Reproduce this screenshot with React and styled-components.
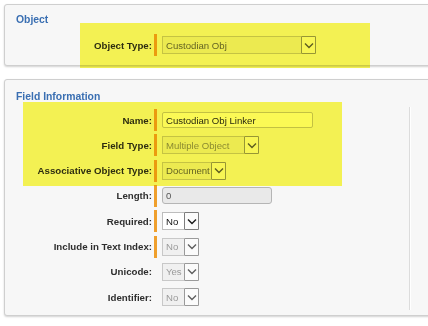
import React from "react";
import styled, { createGlobalStyle } from "styled-components";

const GlobalStyle = createGlobalStyle`
  html, body {
    margin: 0;
    padding: 0;
    background: #ffffff;
    overflow: hidden;
  }
  body {
    font-family: "Liberation Sans", Arial, sans-serif;
  }
`;

const Page = styled.div`
  position: relative;
  width: 428px;
  height: 326px;
  padding: 4px 0 0 4px;
  box-sizing: border-box;
`;

const Panel = styled.section`
  width: 440px;
  height: ${(p) => p.$height}px;
  box-sizing: border-box;
  margin-bottom: 13px;
  padding: ${(p) => p.$padTop}px 0 0 11px;
  background: #f7f7f7;
  border: 1px solid #cfcfcf;
  border-radius: 3px;
  box-shadow: 0 1px 2px rgba(0, 0, 0, 0.18);
`;

const Heading = styled.h2`
  margin: 0 0 ${(p) => p.$gap}px 0;
  font-size: 10.4px;
  line-height: 12px;
  font-weight: 700;
  color: #3a6fb2;
`;

const Rows = styled.div`
  width: 393px;
  border-right: 1px solid #dcdcdc;
  box-shadow: 1px 0 0 #ffffff;
`;

const Row = styled.div`
  display: flex;
  align-items: center;
  height: 25.3px;
`;

const Label = styled.label`
  width: 136px;
  text-align: right;
  font-size: 9.7px;
  font-weight: 700;
  color: #2e2e2e;
  white-space: nowrap;
`;

const Bar = styled.span`
  width: 3px;
  height: 22px;
  margin: 0 5px 0 2px;
  background: ${(p) => (p.$show ? "#ef9f2c" : "transparent")};
`;

const TextInput = styled.div`
  width: ${(p) => p.$w}px;
  height: ${(p) => p.$h}px;
  box-sizing: border-box;
  display: flex;
  align-items: center;
  padding-left: 3px;
  border: 1px solid ${(p) => (p.$disabled ? "#b5b5b5" : "#c6c6c6")};
  border-radius: ${(p) => (p.$disabled ? 3 : 2)}px;
  background: ${(p) => (p.$disabled ? "#e9e9e9" : "#ffffff")};
  font-size: 9.6px;
  color: ${(p) => (p.$disabled ? "#555555" : "#2a2a2a")};
`;

const SelectBox = styled.div`
  width: ${(p) => p.$w}px;
  height: 18px;
  box-sizing: border-box;
  display: flex;
  align-items: stretch;
  border: 1px solid ${(p) => (p.$disabled ? "#c8c8c8" : "#bdbdbd")};
  background: ${(p) => (p.$disabled ? "#f0f0f0" : "#ffffff")};
`;

const SelectText = styled.span`
  flex: 1;
  display: flex;
  align-items: center;
  padding-left: 3px;
  font-size: 9.6px;
  color: ${(p) => p.$color};
  white-space: nowrap;
  overflow: hidden;
`;

const ArrowBox = styled.span`
  width: 15px;
  box-sizing: border-box;
  margin: -1px -1px -1px 0;
  display: flex;
  align-items: center;
  justify-content: center;
  border: 1px solid ${(p) => (p.$disabled ? "#9a9a9a" : "#7d7d7d")};
  border-radius: 1px;
  background: #fbfbfb;
`;

const Highlight = styled.div`
  position: absolute;
  left: ${(p) => p.$x}px;
  top: ${(p) => p.$y}px;
  width: ${(p) => p.$w}px;
  height: ${(p) => p.$h}px;
  background: #fbf955;
  mix-blend-mode: multiply;
  pointer-events: none;
`;

function Chevron({ disabled }) {
  return (
    <svg width="10" height="7" viewBox="0 0 10 7">
      <polyline
        points="1,1.5 5,5.5 9,1.5"
        fill="none"
        stroke={disabled ? "#5e5e5e" : "#1a1a1a"}
        strokeWidth="1.4"
      />
    </svg>
  );
}

function Select({ value, width, color, disabled }) {
  return (
    <SelectBox $w={width} $disabled={disabled}>
      <SelectText $color={color}>{value}</SelectText>
      <ArrowBox $disabled={disabled}>
        <Chevron disabled={disabled} />
      </ArrowBox>
    </SelectBox>
  );
}

function Field({ label, required, children }) {
  return (
    <Row>
      <Label>{label}</Label>
      <Bar $show={required} />
      {children}
    </Row>
  );
}

export default function App() {
  return (
    <Page>
      <GlobalStyle />
      <Panel $height={62} $padTop={9}>
        <Heading $gap={6.5}>Object</Heading>
        <Field label="Object Type:" required>
          <Select value="Custodian Obj" width={154} color="#666" disabled />
        </Field>
      </Panel>

      <Panel $height={237} $padTop={11}>
        <Heading $gap={4.4}>Field Information</Heading>
        <Rows>
          <Field label="Name:" required>
            <TextInput $w={151} $h={16}>Custodian Obj Linker</TextInput>
          </Field>
          <Field label="Field Type:" required>
            <Select value="Multiple Object" width={97} color="#8e8e8e" disabled />
          </Field>
          <Field label="Associative Object Type:" required>
            <Select value="Document" width={64} color="#666" disabled />
          </Field>
          <Field label="Length:" required>
            <TextInput $w={110} $h={17} $disabled>
              0
            </TextInput>
          </Field>
          <Field label="Required:" required>
            <Select value="No" width={37} color="#111" />
          </Field>
          <Field label="Include in Text Index:" required>
            <Select value="No" width={37} color="#9a9a9a" disabled />
          </Field>
          <Field label="Unicode:">
            <Select value="Yes" width={37} color="#9a9a9a" disabled />
          </Field>
          <Field label="Identifier:">
            <Select value="No" width={37} color="#9a9a9a" disabled />
          </Field>
        </Rows>
      </Panel>

      <Highlight $x={80} $y={23} $w={290} $h={45} />
      <Highlight $x={23} $y={102} $w={319} $h={84} />
    </Page>
  );
}
